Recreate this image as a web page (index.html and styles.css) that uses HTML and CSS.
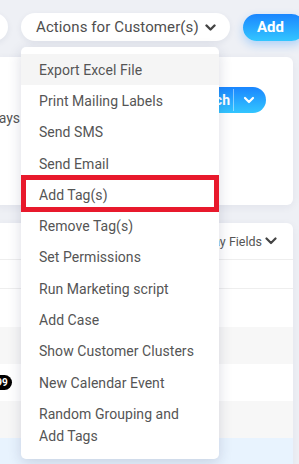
FILE: index.html
```html
<!DOCTYPE html>
<html>
<head>
<meta charset="utf-8">
<link rel="stylesheet" href="styles.css">
</head>
<body>
<div class="page">
  <div class="toolbar">
    <div class="pill ghost"></div>
    <div class="pill actions">
      <span>Actions for Customer(s)</span>
      <svg class="chev" width="11" height="8" viewBox="0 0 11 8"><path d="M1.5 1.5 L5.5 5.5 L9.5 1.5" fill="none" stroke="#444" stroke-width="2.4" stroke-linecap="round" stroke-linejoin="round"/></svg>
    </div>
    <div class="btn-add">Add</div>
  </div>

  <div class="card filter">
    <div class="filter-row">
      <div class="clip-label"><span>Birthdays</span></div>
      <div class="search-btn">
        <span class="search-text">Search</span>
        <span class="divider"></span>
        <svg width="12" height="8" viewBox="0 0 12 8"><path d="M2 2 L6 6 L10 2" fill="none" stroke="#fff" stroke-width="2.2" stroke-linecap="round" stroke-linejoin="round"/></svg>
      </div>
    </div>
  </div>

  <div class="card table">
    <div class="table-head">
      <span>Display Fields</span>
      <svg width="12" height="8" viewBox="0 0 12 8"><path d="M1.5 1.5 L6 6 L10.5 1.5" fill="none" stroke="#444" stroke-width="2.2" stroke-linecap="round" stroke-linejoin="round"/></svg>
    </div>
    <div class="row r1"></div>
    <div class="row r2"></div>
    <div class="row gray"></div>
    <div class="row white"><span class="badge">99</span></div>
    <div class="row gray"></div>
    <div class="row blue"></div>
  </div>

  <ul class="menu">
    <li class="item hover">Export Excel File</li>
    <li class="item">Print Mailing Labels</li>
    <li class="item">Send SMS</li>
    <li class="item">Send Email</li>
    <li class="item marked">Add Tag(s)</li>
    <li class="item">Remove Tag(s)</li>
    <li class="item">Set Permissions</li>
    <li class="item">Run Marketing script</li>
    <li class="item">Add Case</li>
    <li class="item">Show Customer Clusters</li>
    <li class="item">New Calendar Event</li>
    <li class="item multi">Random Grouping and<br>Add Tags</li>
  </ul>
</div>
</body>
</html>
```

FILE: styles.css
```css
* { box-sizing: border-box; }
html, body {
  margin: 0;
  padding: 0;
  width: 299px;
  height: 464px;
  overflow: hidden;
  background: #eef0f5;
  font-family: Roboto, "Liberation Sans", Arial, sans-serif;
}
.page {
  position: relative;
  width: 299px;
  height: 464px;
  overflow: hidden;
  padding-top: 13px;
}
.toolbar {
  display: flex;
  align-items: center;
  gap: 13px;
  margin-left: -40px;
  height: 28px;
}
.pill {
  height: 28px;
  border-radius: 14px;
  background: #fff;
  box-shadow: 0 2px 6px rgba(30, 40, 80, 0.07);
  flex: none;
}
.ghost { width: 48px; }
.actions {
  width: 209px;
  display: flex;
  align-items: center;
  padding-left: 15px;
  gap: 6px;
  color: #4e4e4e;
  font-size: 15px;
  letter-spacing: 0.1px;
}
.chev { margin-top: 1px; }
.btn-add {
  flex: none;
  width: 62px;
  height: 27px;
  border-radius: 14px;
  background: linear-gradient(180deg, #1a86ff 0%, #33c6ff 100%);
  box-shadow: 0 4px 10px rgba(30, 140, 255, 0.3);
  color: #fff;
  font-weight: 700;
  font-size: 15px;
  display: flex;
  align-items: center;
  padding-left: 14px;
}
.card {
  background: #fff;
  border-radius: 6px;
  box-shadow: 0 2px 8px rgba(30, 40, 80, 0.06);
  width: 299px;
  margin-left: -6px;
}
.filter {
  margin-top: 16px;
  height: 148px;
  padding: 30px 27px 0 0;
}
.filter-row {
  display: flex;
  align-items: flex-start;
  justify-content: space-between;
}
.clip-label {
  width: 26px;
  display: flex;
  justify-content: flex-end;
  white-space: nowrap;
  font-size: 14px;
  color: #555;
  margin-top: 23px;
}
.search-btn {
  height: 26px;
  width: 96px;
  border-radius: 13px;
  background: linear-gradient(180deg, #1a86ff 0%, #33c6ff 100%);
  display: flex;
  align-items: center;
  justify-content: flex-end;
  color: #fff;
  font-weight: 700;
  font-size: 14px;
  padding-right: 11px;
}
.search-text { margin-right: 3px; }
.divider {
  width: 1px;
  height: 22px;
  background: rgba(255, 255, 255, 0.45);
  margin-right: 9px;
}
.table {
  margin-top: 18px;
  height: 260px;
  overflow: hidden;
}
.table-head {
  height: 37px;
  display: flex;
  align-items: center;
  justify-content: flex-end;
  padding-right: 16px;
  gap: 3px;
  font-size: 12.5px;
  color: #555;
  border-bottom: 1px solid #eeeeee;
}
.row { height: 37px; }
.r1 { height: 29px; border-bottom: 1px solid #eeeeee; }
.r2 { height: 38px; }
.gray { background: #f7f7f7; }
.white { background: #fff; display: flex; align-items: center; }
.blue { background: #e8f3fe; height: 30px; }
.badge {
  margin-left: -2px;
  background: #000;
  color: #fff;
  font-size: 10px;
  font-weight: 700;
  border-radius: 8px;
  height: 15px;
  width: 20px;
  display: flex;
  align-items: center;
  justify-content: center;
}
.menu {
  position: absolute;
  top: 47px;
  left: 21px;
  width: 198px;
  margin: 0;
  padding: 7px 0 4px;
  list-style: none;
  background: #fff;
  border-radius: 5px;
  box-shadow: 0 4px 14px rgba(30, 40, 80, 0.16);
}
.item {
  height: 31.3px;
  display: flex;
  align-items: center;
  padding: 0 18px;
  font-size: 14px;
  color: #555;
  letter-spacing: 0.05px;
  white-space: nowrap;
}
.hover { background: #f5f5f5; }
.marked { position: relative; }
.marked::after {
  content: "";
  position: absolute;
  left: 0;
  right: 0;
  top: -4px;
  bottom: -2px;
  border: 5px solid #e8192c;
}
.multi {
  display: block;
  height: auto;
  line-height: 22px;
  padding-top: 5px;
  padding-bottom: 8px;
}
```
